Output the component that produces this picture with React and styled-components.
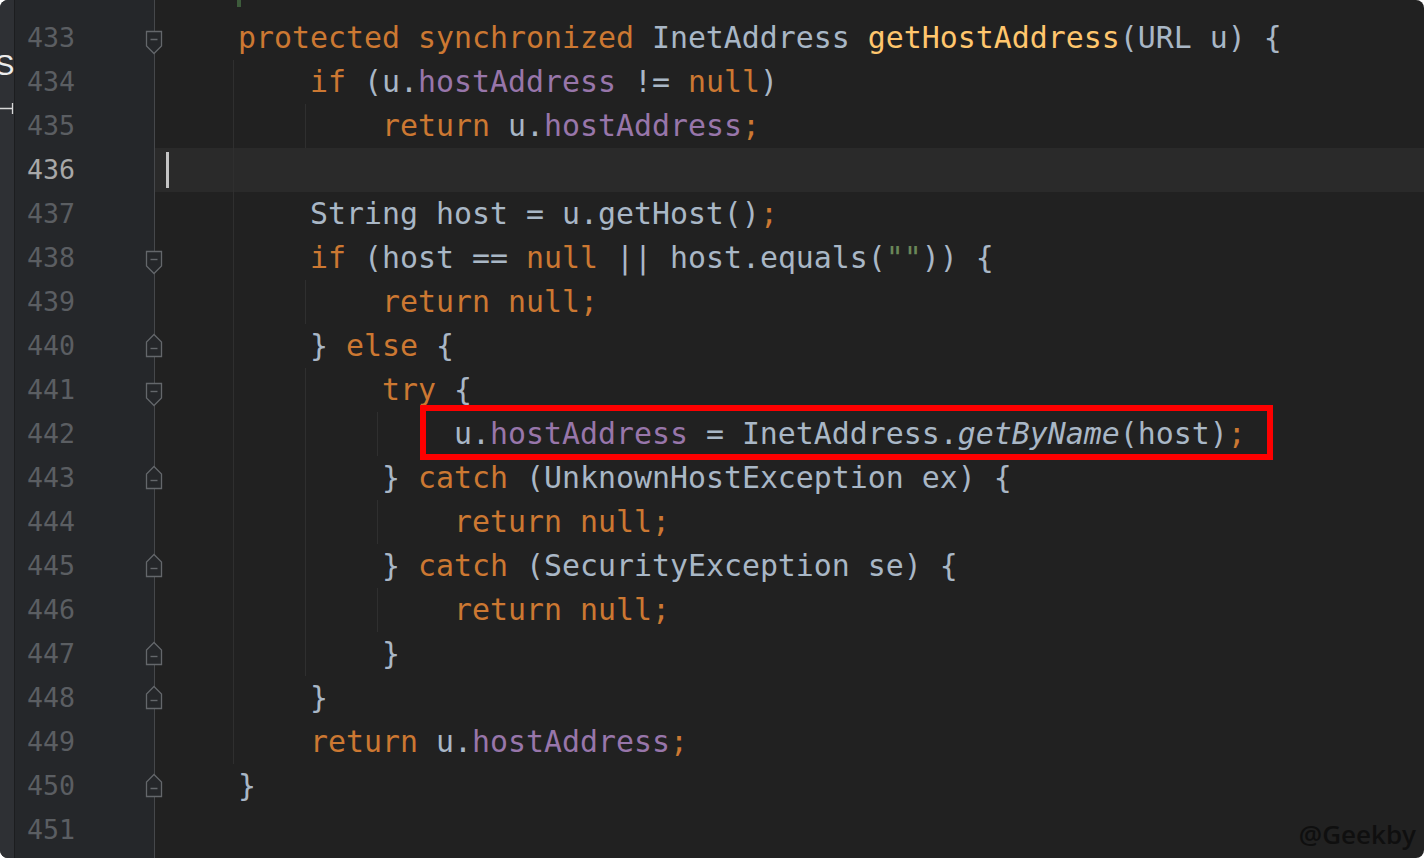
import React from 'react'
import styled, { createGlobalStyle } from 'styled-components'

const GlobalStyle = createGlobalStyle`
  html, body {
    margin: 0;
    padding: 0;
    background: #ffffff;
  }
`

const colors = {
  p: '#a9b7c6',
  k: '#cc7832',
  f: '#9876aa',
  d: '#ffc66d',
  s: '#6a8759',
  i: '#a9b7c6',
}

const lines = [
  { n: 433, fold: 'start', indent: 4, guides: [], code: [['k', 'protected synchronized'], ['p', ' InetAddress '], ['d', 'getHostAddress'], ['p', '(URL u) {']] },
  { n: 434, indent: 8, guides: [1], code: [['k', 'if'], ['p', ' (u.'], ['f', 'hostAddress'], ['p', ' != '], ['k', 'null'], ['p', ')']] },
  { n: 435, indent: 12, guides: [1, 2], code: [['k', 'return'], ['p', ' u.'], ['f', 'hostAddress'], ['k', ';']] },
  { n: 436, indent: 0, guides: [1], current: true, code: [] },
  { n: 437, indent: 8, guides: [1], code: [['p', 'String host = u.getHost()'], ['k', ';']] },
  { n: 438, fold: 'start', indent: 8, guides: [1], code: [['k', 'if'], ['p', ' (host == '], ['k', 'null'], ['p', ' || host.equals('], ['s', '""'], ['p', ')) {']] },
  { n: 439, indent: 12, guides: [1, 2], code: [['k', 'return null;']] },
  { n: 440, fold: 'end', indent: 8, guides: [1], code: [['p', '} '], ['k', 'else'], ['p', ' {']] },
  { n: 441, fold: 'start', indent: 12, guides: [1, 2], code: [['k', 'try'], ['p', ' {']] },
  { n: 442, indent: 16, guides: [1, 2, 3], boxed: true, code: [['p', 'u.'], ['f', 'hostAddress'], ['p', ' = InetAddress.'], ['i', 'getByName'], ['p', '(host)'], ['k', ';']] },
  { n: 443, fold: 'end', indent: 12, guides: [1, 2], code: [['p', '} '], ['k', 'catch'], ['p', ' (UnknownHostException ex) {']] },
  { n: 444, indent: 16, guides: [1, 2, 3], code: [['k', 'return null;']] },
  { n: 445, fold: 'end', indent: 12, guides: [1, 2], code: [['p', '} '], ['k', 'catch'], ['p', ' (SecurityException se) {']] },
  { n: 446, indent: 16, guides: [1, 2, 3], code: [['k', 'return null;']] },
  { n: 447, fold: 'end', indent: 12, guides: [1, 2], code: [['p', '}']] },
  { n: 448, fold: 'end', indent: 8, guides: [1], code: [['p', '}']] },
  { n: 449, indent: 8, guides: [1], code: [['k', 'return'], ['p', ' u.'], ['f', 'hostAddress'], ['k', ';']] },
  { n: 450, fold: 'end', indent: 4, guides: [], code: [['p', '}']] },
  { n: 451, indent: 0, guides: [], code: [] },
]

const guideColor = '#2f2f2f'

// indent guides drawn as thin gradient layers, one per level
const rowBackground = ({ $guides = [], $current }) => {
  const layers = $guides.map(
    (l) => `linear-gradient(${guideColor}, ${guideColor}) ${6 + 72 * l}px 0 / 1px 100% no-repeat`
  )
  const base = $current ? '#2a2a2a' : 'transparent'
  return layers.length ? `${layers.join(', ')}, ${base}` : base
}

function FoldMarker({ end }) {
  return (
    <Marker $end={end} width="18" height="25" viewBox="0 0 18 25">
      {end ? (
        <>
          <path d="M1.5 23.5 H16.5 V9 L9 1.5 L1.5 9 Z" fill="#25272a" stroke="#64676b" strokeWidth="1.3" />
          <path d="M5.5 15.5 H12.5" stroke="#64676b" strokeWidth="1.4" />
        </>
      ) : (
        <>
          <path d="M1.5 1.5 H16.5 V16 L9 23.5 L1.5 16 Z" fill="#25272a" stroke="#64676b" strokeWidth="1.3" />
          <path d="M5.5 9.5 H12.5" stroke="#64676b" strokeWidth="1.4" />
        </>
      )}
    </Marker>
  )
}

function App() {
  return (
    <>
      <GlobalStyle />
      <Frame>
        <Strip>
          <StripLabel>S</StripLabel>
          <svg width="14" height="14" viewBox="0 0 14 14" style={{ marginTop: 22 }}>
            <path d="M0 6.5 H12.5 M12.5 1 V12" stroke="#d8d8d8" strokeWidth="1.3" fill="none" />
          </svg>
        </Strip>
        <Gutter>
          <Spacer />
          {lines.map((l) => (
            <GutterRow key={l.n} $current={l.current}>
              {l.n}
              {l.fold && <FoldMarker end={l.fold === 'end'} />}
            </GutterRow>
          ))}
        </Gutter>
        <Code>
          <Spacer>
            <StringMark />
          </Spacer>
          {lines.map((l) => {
            const tokens = l.code.map(([t, text], i) => (
              <Tok key={i} $t={t}>{text}</Tok>
            ))
            return (
              <Row key={l.n} $guides={l.guides} $current={l.current}>
                {' '.repeat(l.indent)}
                {l.boxed ? <Boxed>{tokens}</Boxed> : tokens}
                {l.current && <Caret />}
              </Row>
            )
          })}
        </Code>
        <Watermark>@Geekby</Watermark>
      </Frame>
    </>
  )
}

const Frame = styled.div`
  position: relative;
  display: flex;
  width: 1424px;
  height: 858px;
  overflow: hidden;
  border-radius: 8px;
  background: #212121;
`

const Strip = styled.div`
  width: 14px;
  flex-shrink: 0;
  display: flex;
  flex-direction: column;
  padding-top: 51px;
  overflow: hidden;
  background: #2e3034;
  border-right: 1px solid #1c1d1f;
`

const StripLabel = styled.div`
  margin-left: -5px;
  font-family: "Liberation Sans", Arial, sans-serif;
  font-size: 29px;
  line-height: 29px;
  color: #ececec;
`

const Gutter = styled.div`
  width: 139px;
  flex-shrink: 0;
  background: #25272a;
  border-right: 1px solid #46484b;
`

const Spacer = styled.div`
  height: 16px;
`

const StringMark = styled.div`
  width: 4px;
  height: 7px;
  margin-left: 82px;
  background: #3d5b3b;
`

const GutterRow = styled.div`
  position: relative;
  height: 44px;
  padding-left: 12px;
  font-family: "DejaVu Sans Mono", Menlo, monospace;
  font-size: 26.6px;
  line-height: 44px;
  color: ${({ $current }) => ($current ? '#a8a8a8' : '#5b5e62')};
`

const Marker = styled.svg`
  position: absolute;
  right: -9px;
  top: ${({ $end }) => ($end ? '9px' : '14px')};
`

const Code = styled.div`
  flex: 1;
  min-width: 0;
`

const Row = styled.div`
  position: relative;
  height: 44px;
  padding-left: 11px;
  white-space: pre;
  font-family: "DejaVu Sans Mono", Menlo, monospace;
  font-size: 29.9px;
  line-height: 44px;
  color: #a9b7c6;
  background: ${rowBackground};
`

const Tok = styled.span`
  color: ${({ $t }) => colors[$t]};
  font-style: ${({ $t }) => ($t === 'i' ? 'italic' : 'normal')};
`

const Boxed = styled.span`
  position: relative;
  display: inline-block;
  height: 44px;

  &::after {
    content: '';
    position: absolute;
    left: -34px;
    right: -27px;
    top: -7px;
    bottom: -4px;
    border: 6px solid #fe0000;
  }
`

const Caret = styled.span`
  position: absolute;
  left: 11px;
  top: 4px;
  width: 3px;
  height: 36px;
  background: #c4c4c4;
`

const Watermark = styled.div`
  position: absolute;
  right: 8px;
  bottom: 11px;
  font-family: "Open Sans", "Liberation Sans", sans-serif;
  font-size: 26px;
  font-weight: 600;
  line-height: 26px;
  color: #0f0f0f;
`

export default App
